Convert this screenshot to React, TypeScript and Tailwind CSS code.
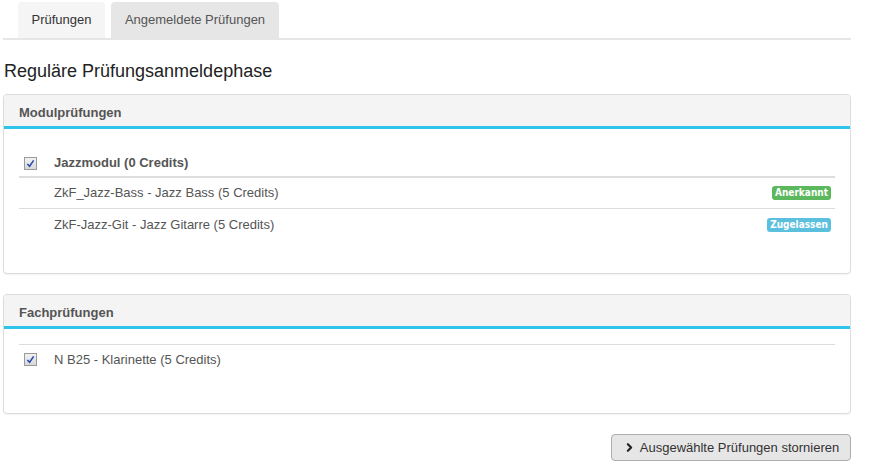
import { ChevronRight } from "lucide-react";

function Checkbox() {
  return (
    <span className="inline-flex h-[13px] w-[13px] items-center justify-center border border-[#9a9a9a] bg-gradient-to-b from-[#f2f2f2] to-[#d8d8d8]">
      <svg viewBox="0 0 10 10" className="h-[9px] w-[9px]">
        <path d="M1.5 5.5 L4 8 L8.5 1.5" fill="none" stroke="#2a4db0" strokeWidth="1.8" />
      </svg>
    </span>
  );
}

function Badge({ label, color }: { label: string; color: string }) {
  return (
    <span
      className={`rounded-[3px] px-[3px] py-[1px] text-[10px] font-bold leading-[12px] text-white ${color}`}
      style={{ fontFamily: "'DejaVu Sans Condensed', 'DejaVu Sans', sans-serif" }}
    >
      {label}
    </span>
  );
}

function Panel({ title, children }: { title: string; children: React.ReactNode }) {
  return (
    <div className="rounded-[4px] border border-[#dcdcdc] bg-white shadow-[0_1px_1px_rgba(0,0,0,0.05)]">
      <div className="h-[34px] rounded-t-[4px] border-b-[3px] border-[#2fc4e9] bg-[#f4f4f4] px-[15px] pt-[8px] text-[13px] font-bold text-[#555]">
        {title}
      </div>
      {children}
    </div>
  );
}

export default function App() {
  return (
    <div
      className="h-[471px] w-[877px] bg-white text-[13px] text-[#555]"
      style={{ fontFamily: "'Liberation Sans', Arial, sans-serif" }}
    >
      <div className="ml-[3px] mr-[26px] flex gap-[6px] border-b-2 border-[#e6e6e6] pl-[15px] pt-[2px]">
        <div className="flex h-[36px] w-[87px] items-center justify-center rounded-t-[4px] bg-[#f5f5f5] text-[#333]">
          Prüfungen
        </div>
        <div className="flex h-[36px] w-[168px] items-center justify-center rounded-t-[4px] bg-[#e6e6e6] text-[#555]">
          Angemeldete Prüfungen
        </div>
      </div>

      <h1 className="ml-[4px] mt-[20px] text-[18px] leading-[22px] text-[#222]">
        Reguläre Prüfungsanmeldephase
      </h1>

      <div className="ml-[3px] mr-[26px] mt-[12px] flex flex-col gap-[20px]">
        <Panel title="Modulprüfungen">
          <div className="px-[15px] pb-[33px] pt-[21px]">
            <div className="flex h-[28px] items-center border-b-2 border-[#dddddd] pl-[5px]">
              <Checkbox />
              <span className="ml-[17px] font-bold text-[#555]">Jazzmodul (0 Credits)</span>
            </div>
            <div className="flex h-[31px] items-center justify-between border-b border-[#dddddd] pl-[35px] pr-[4px]">
              <span>ZkF_Jazz-Bass - Jazz Bass (5 Credits)</span>
              <Badge label="Anerkannt" color="bg-[#5cb85c]" />
            </div>
            <div className="flex h-[31px] items-center justify-between pl-[35px] pr-[4px]">
              <span>ZkF-Jazz-Git - Jazz Gitarre (5 Credits)</span>
              <Badge label="Zugelassen" color="bg-[#5bc0de]" />
            </div>
          </div>
        </Panel>

        <Panel title="Fachprüfungen">
          <div className="px-[15px] pb-[39px] pt-[15px]">
            <div className="flex h-[30px] items-center border-t border-[#dddddd] pl-[5px]">
              <Checkbox />
              <span className="ml-[17px]">N B25 - Klarinette (5 Credits)</span>
            </div>
          </div>
        </Panel>
      </div>

      <div className="mr-[26px] mt-[20px] flex justify-end">
        <button className="flex h-[27px] w-[240px] items-center justify-center gap-[4px] rounded-[4px] border border-[#adadad] bg-[#e6e6e6] text-[13px] text-[#333]">
          <ChevronRight size={13} strokeWidth={4} className="text-[#222]" />
          Ausgewählte Prüfungen stornieren
        </button>
      </div>
    </div>
  );
}
